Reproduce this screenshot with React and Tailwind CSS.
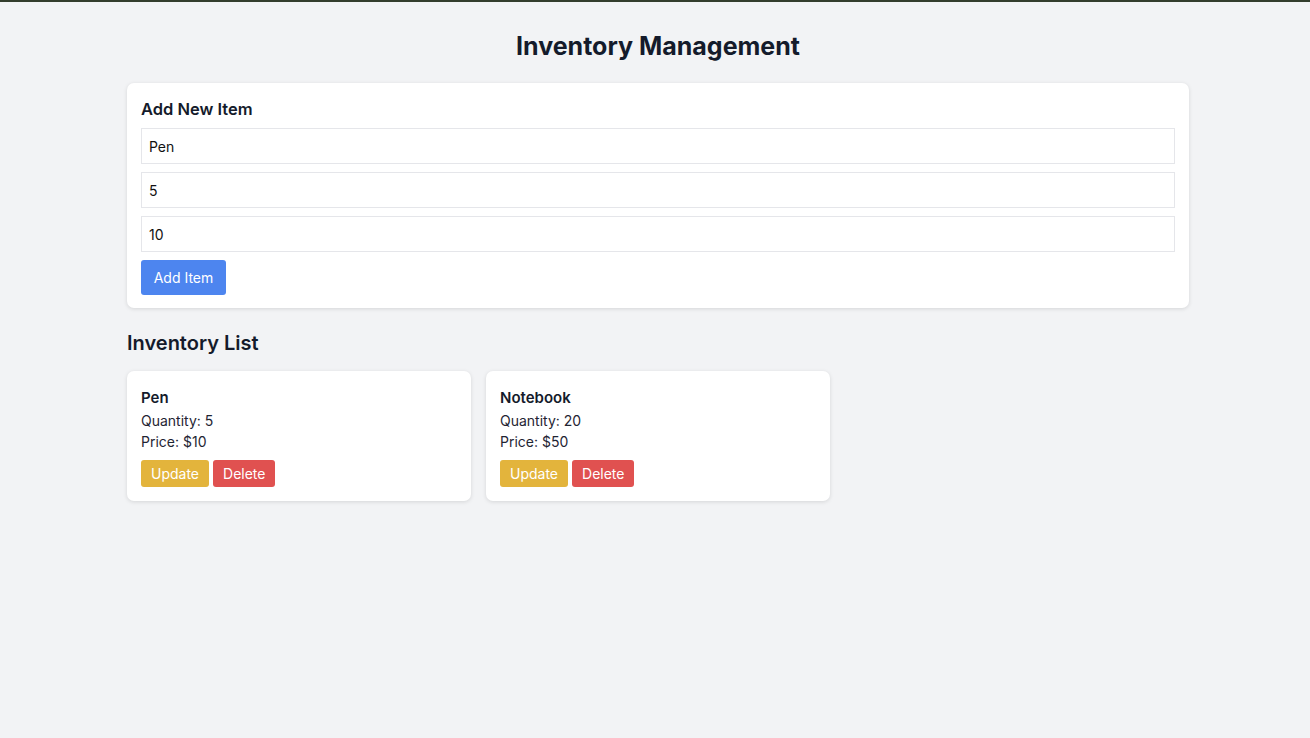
import { useState } from 'react'

/* -------------------- ITEM CARD -------------------- */

function ItemCard({item}){

  return (
    <div className="bg-white rounded-[7px] shadow-[0_1px_4px_rgba(0,0,0,0.12)] px-[14px] pt-[17px] pb-[14px]">

      <h3 className="text-[15px] font-semibold leading-[20px] text-[#141b2b]">
        {item.name}
      </h3>

      <p className="text-[14px] leading-[21px] mt-[2px] text-[#1f2533]">
        Quantity: {item.quantity}
      </p>

      <p className="text-[14px] leading-[21px] text-[#1f2533]">
        Price: ${item.price}
      </p>

      <div className="flex gap-[4px] mt-[8px]">

        <button className="h-[27px] px-[10px] rounded-[3px] bg-[#e3b43c] text-white text-[14px]">
          Update
        </button>

        <button className="h-[27px] px-[10px] rounded-[3px] bg-[#e05150] text-white text-[14px]">
          Delete
        </button>

      </div>

    </div>
  )

}


/* -------------------- MAIN -------------------- */

export default function App(){

  const [name,setName] = useState('Pen')
  const [quantity,setQuantity] = useState('5')
  const [price,setPrice] = useState('10')

  const items = [
    { name: 'Pen', quantity: 5, price: 10 },
    { name: 'Notebook', quantity: 20, price: 50 }
  ]

  return (

    <main
      className="min-h-screen bg-[#f2f3f5] border-t-2 border-[#333d2d] text-[#141b2b]"
      style={{ fontFamily: 'Inter, "Noto Sans", sans-serif' }}
    >

      <div className="w-[1062px] ml-[127px] pt-[29px]">

        <h1 className="text-[25px] font-bold leading-[30px] text-center">
          Inventory Management
        </h1>

        {/* Add form */}

        <div className="mt-[22px] bg-white rounded-[7px] shadow-[0_1px_4px_rgba(0,0,0,0.12)] px-[14px] pt-[14px] pb-[13px]">

          <h2 className="text-[16.5px] font-semibold leading-[24px]">
            Add New Item
          </h2>

          <div className="flex flex-col gap-[8px] mt-[7px]">

            <input
              value={name}
              onChange={e=>setName(e.target.value)}
              className="h-[36px] w-full border border-[#e5e6ea] px-[7px] text-[14px] text-[#111] outline-none"
            />

            <input
              value={quantity}
              onChange={e=>setQuantity(e.target.value)}
              className="h-[36px] w-full border border-[#e5e6ea] px-[7px] text-[14px] text-[#111] outline-none"
            />

            <input
              value={price}
              onChange={e=>setPrice(e.target.value)}
              className="h-[36px] w-full border border-[#e5e6ea] px-[7px] text-[14px] text-[#111] outline-none"
            />

          </div>

          <button className="mt-[8px] h-[35px] w-[85px] rounded-[3px] bg-[#4d85ef] text-white text-[14px]">
            Add Item
          </button>

        </div>

        {/* List */}

        <h2 className="mt-[22px] text-[20px] font-semibold leading-[26px]">
          Inventory List
        </h2>

        <div className="grid grid-cols-3 gap-[15px] mt-[15px]">

          {items.map(item => (
            <ItemCard key={item.name} item={item}/>
          ))}

        </div>

      </div>

    </main>

  )

}
